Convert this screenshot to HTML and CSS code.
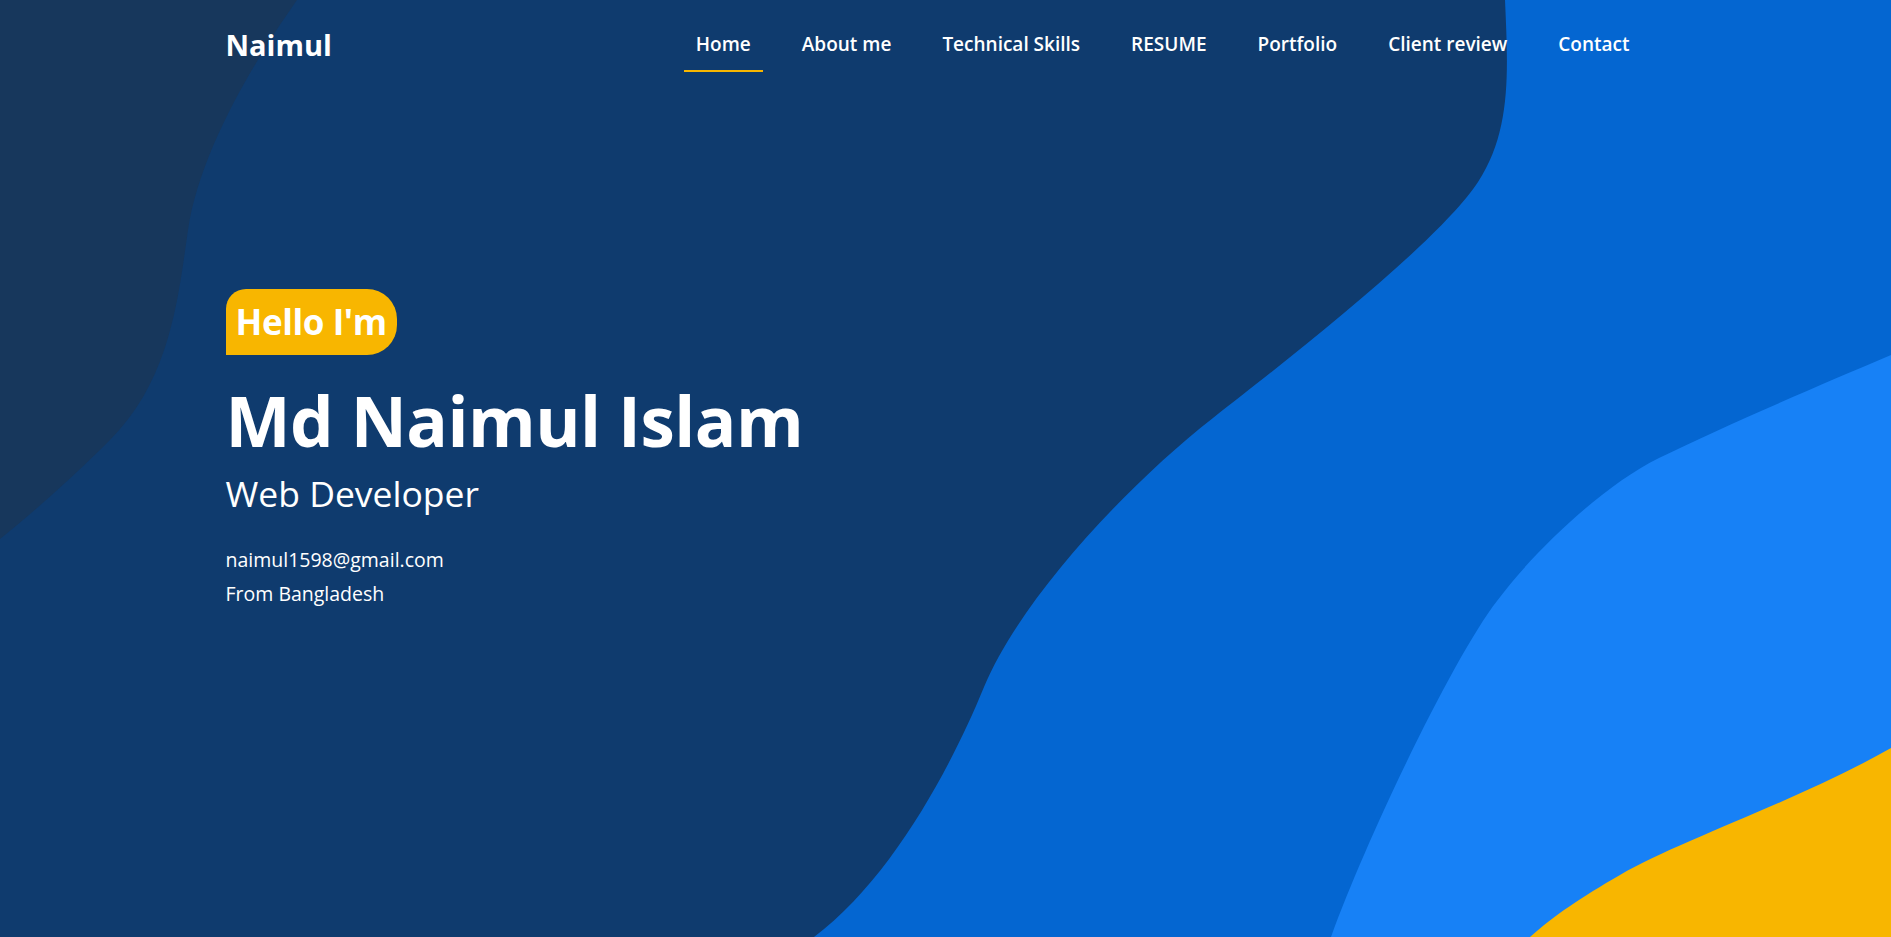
FILE: index.html
```html
<!DOCTYPE html>
<html lang="en">
<head>
<meta charset="utf-8">
<title>Naimul</title>
<link rel="stylesheet" href="styles.css">
</head>
<body>
<svg class="bg" viewBox="0 0 1891 937" preserveAspectRatio="none" aria-hidden="true">
  <path class="s-dark" d="M0 0 H297 C255 60 200 150 188 230 C178 300 170 380 110 440 C70 480 30 515 0 539 Z"/>
  <path class="s-mid" d="M1505 0 C1508 70 1512 130 1478 182 C1440 240 1300 350 1213 418 C1126 486 1020 600 984 687 C950 770 890 880 814 937 L1891 937 L1891 0 Z"/>
  <path class="s-light" d="M1891 355 C1820 385 1720 428 1659 458 C1600 487 1530 556 1497 601 C1455 655 1370 830 1331 937 L1891 937 Z"/>
  <path class="s-yellow" d="M1891 748 C1800 800 1680 840 1620 875 C1580 898 1555 915 1530 937 L1891 937 Z"/>
</svg>
<div class="wrap">
  <header class="header">
    <a class="logo" href="#">Naimul</a>
    <nav class="nav">
      <a class="nav-link active" href="#">Home</a>
      <a class="nav-link" href="#">About me</a>
      <a class="nav-link" href="#">Technical Skills</a>
      <a class="nav-link" href="#">RESUME</a>
      <a class="nav-link" href="#">Portfolio</a>
      <a class="nav-link" href="#">Client review</a>
      <a class="nav-link" href="#">Contact</a>
    </nav>
  </header>
  <main class="hero">
    <span class="hello">Hello I'm</span>
    <h1 class="name">Md Naimul Islam</h1>
    <h2 class="role">Web Developer</h2>
    <p class="info">naimul1598@gmail.com</p>
    <p class="info">From Bangladesh</p>
  </main>
</div>
</body>
</html>
```
FILE: styles.css
```css
* { box-sizing: border-box; }
html, body { margin: 0; padding: 0; }
body {
  height: 937px;
  overflow: hidden;
  background: #0f3b6e;
  color: #fff;
  font-family: "Open Sans", "Noto Sans", sans-serif;
  position: relative;
}
.bg {
  position: absolute;
  left: 0; top: 0;
  width: 100%; height: 100%;
  z-index: 0;
}
.s-dark { fill: #17375c; }
.s-mid { fill: #0466d1; }
.s-light { fill: #1781f6; }
.s-yellow { fill: #f8b600; }

.wrap {
  position: relative;
  z-index: 1;
  width: 1440px;
  margin: 0 auto;
}
.header {
  display: flex;
  align-items: flex-start;
  height: 72px;
}
.logo {
  margin-top: 27px;
  font-size: 29px;
  line-height: 36px;
  font-weight: 700;
  color: #fff;
  text-decoration: none;
}
.nav {
  margin-left: auto;
  margin-right: 24px;
  display: flex;
  gap: 27px;
}
.nav-link {
  display: block;
  padding: 32px 12px 14px;
  font-size: 19px;
  line-height: 24px;
  font-weight: 600;
  color: #fff;
  text-decoration: none;
  border-bottom: 2px solid transparent;
}
.nav-link.active { border-bottom-color: #f8b600; }

.hero {
  padding-top: 217px;
}
.hello {
  display: inline-block;
  height: 66px;
  line-height: 66px;
  padding: 0 10px 0 10px;
  background: #f8b600;
  border-radius: 20px 30px 30px 0;
  font-size: 35px;
  letter-spacing: -0.4px;
  font-weight: 700;
  color: #fff;
}
.name {
  margin: 22px 0 0;
  font-size: 69px;
  line-height: 86px;
  letter-spacing: -0.5px;
  font-weight: 700;
}
.role {
  margin: 8px 0 0;
  font-size: 35.5px;
  line-height: 44px;
  font-weight: 500;
}
.info {
  margin: 0;
  font-size: 19.5px;
  line-height: 34px;
}
.role + .info { margin-top: 28px; }
```
